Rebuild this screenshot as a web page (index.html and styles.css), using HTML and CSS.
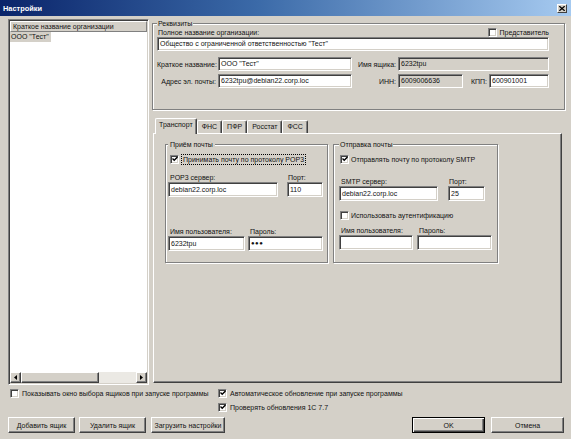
FILE: index.html
```html
<!DOCTYPE html>
<html lang="ru">
<head>
<meta charset="utf-8">
<title>Настройки</title>
<link rel="stylesheet" href="styles.css">
</head>
<body>
<div class="window">
  <div class="titlebar">
    <span class="title">Настройки</span>
    <span class="close"><svg width="6" height="5" viewBox="0 0 6 5"><path d="M0.3 0.2 L5.7 4.8 M5.7 0.2 L0.3 4.8" stroke="#000" stroke-width="1.3" fill="none"/></svg></span>
  </div>
  <div class="client">
    <div class="main">
      <div class="list">
        <div class="list-head">Краткое название организации</div>
        <div class="list-row"><span class="sel">ООО "Тест"</span></div>
        <div class="list-body"></div>
        <div class="hscroll">
          <span class="sb-btn"><svg width="3" height="5" viewBox="0 0 3 5"><path d="M3 0 L0 2.5 L3 5 Z" fill="#000"/></svg></span>
          <span class="sb-thumb"></span>
          <span class="sb-track"></span>
          <span class="sb-btn"><svg width="3" height="5" viewBox="0 0 3 5"><path d="M0 0 L3 2.5 L0 5 Z" fill="#000"/></svg></span>
        </div>
      </div>
      <div class="right">
        <fieldset class="group rekv">
          <legend>Реквизиты</legend>
          <div class="row1">
            <span class="lbl-first">Полное название организации:</span>
            <span class="cbline"><span class="cb"></span><span>Представитель</span></span>
          </div>
          <div class="input">Общество с ограниченной ответственностью "Тест"</div>
          <div class="rekv-grid">
            <span class="rlabel">Краткое название:</span>
            <div class="input">ООО "Тест"</div>
            <span class="rlabel">Имя ящика:</span>
            <div class="input ro">6232tpu</div>
            <span class="rlabel">Адрес эл. почты:</span>
            <div class="input">6232tpu@debian22.corp.loc</div>
            <span class="rlabel">ИНН:</span>
            <div class="inn-kpp">
              <div class="input ro w-inn">6009006636</div>
              <span class="kpp-label">КПП:</span>
              <div class="input w-kpp">600901001</div>
            </div>
          </div>
        </fieldset>
        <div class="tabs">
          <div class="tabstrip">
            <span class="tab active">Транспорт</span>
            <span class="tab">ФНС</span>
            <span class="tab">ПФР</span>
            <span class="tab">Росстат</span>
            <span class="tab">ФСС</span>
          </div>
          <div class="tabpanel">
            <fieldset class="group pop">
              <legend>Приём почты</legend>
              <div class="cbline cbrow"><span class="cb"><svg width="6" height="6" viewBox="0 0 6 6"><path d="M0.5 2.6 L2.2 4.3 L5.5 0.9" fill="none" stroke="#000" stroke-width="1.4"/></svg></span><span class="focus">Принимать почту по протоколу POP3</span></div>
              <div class="fields pop-r1">
                <div class="field w110"><span class="flabel">POP3 сервер:</span><div class="input">debian22.corp.loc</div></div>
                <div class="field w36 ml9"><span class="flabel p1">Порт:</span><div class="input">110</div></div>
              </div>
              <div class="fields pop-r2">
                <div class="field w77"><span class="flabel">Имя пользователя:</span><div class="input">6232tpu</div></div>
                <div class="field w75 ml3"><span class="flabel">Пароль:</span><div class="input dots">●●●</div></div>
              </div>
            </fieldset>
            <fieldset class="group smtp">
              <legend>Отправка почты</legend>
              <div class="cbline cbrow"><span class="cb"><svg width="6" height="6" viewBox="0 0 6 6"><path d="M0.5 2.6 L2.2 4.3 L5.5 0.9" fill="none" stroke="#000" stroke-width="1.4"/></svg></span><span>Отправлять почту по протоколу SMTP</span></div>
              <div class="fields smtp-r1">
                <div class="field w99"><span class="flabel">SMTP сервер:</span><div class="input">debian22.corp.loc</div></div>
                <div class="field w37 ml10"><span class="flabel p1">Порт:</span><div class="input">25</div></div>
              </div>
              <div class="cbline cbrow auth"><span class="cb"></span><span>Использовать аутентификацию</span></div>
              <div class="fields smtp-r2">
                <div class="field w74"><span class="flabel">Имя пользователя:</span><div class="input"></div></div>
                <div class="field w75 ml4"><span class="flabel">Пароль:</span><div class="input"></div></div>
              </div>
            </fieldset>
          </div>
        </div>
      </div>
    </div>
    <div class="options">
      <div class="opt-left">
        <div class="cbline optrow"><span class="cb"></span><span>Показывать окно выбора ящиков при запуске программы</span></div>
      </div>
      <div class="opt-right">
        <div class="cbline optrow"><span class="cb"><svg width="6" height="6" viewBox="0 0 6 6"><path d="M0.5 2.6 L2.2 4.3 L5.5 0.9" fill="none" stroke="#000" stroke-width="1.4"/></svg></span><span>Автоматическое обновление при запуске программы</span></div>
        <div class="cbline optrow"><span class="cb"><svg width="6" height="6" viewBox="0 0 6 6"><path d="M0.5 2.6 L2.2 4.3 L5.5 0.9" fill="none" stroke="#000" stroke-width="1.4"/></svg></span><span>Проверять обновления 1С 7.7</span></div>
      </div>
    </div>
    <div class="buttons">
      <button class="btn b-add">Добавить ящик</button>
      <button class="btn b-del">Удалить ящик</button>
      <button class="btn b-load">Загрузить настройки</button>
      <button class="btn b-ok default">OK</button>
      <button class="btn b-cancel">Отмена</button>
    </div>
  </div>
</div>
</body>
</html>
```
FILE: styles.css
```css
* { box-sizing: border-box; }
html, body { margin: 0; padding: 0; }
body {
  width: 571px;
  height: 439px;
  overflow: hidden;
  background: #d4d0c8;
  font-family: "Liberation Sans", Arial, sans-serif;
  font-size: 7px;
  color: #111;
}
.window {
  width: 571px;
  height: 439px;
  display: flex;
  flex-direction: column;
  background: #d4d0c8;
}
.titlebar {
  height: 16px;
  flex: none;
  display: flex;
  align-items: center;
  justify-content: space-between;
  padding: 0 4px 0 3px;
  background: linear-gradient(to right, #0a246a, #3b6aa8 45%, #a6caf0);
}
.title { color: #fff; font-weight: bold; font-size: 7.4px; }
.close {
  width: 10px;
  height: 9px;
  display: flex;
  align-items: center;
  justify-content: center;
  background: #d4d0c8;
  border: 1px solid;
  border-color: #fff #404040 #404040 #fff;
}
.client {
  flex: 1;
  display: flex;
  flex-direction: column;
  padding: 3px 0 0 8px;
}
.main { display: flex; height: 366px; flex: none; }

/* list */
.list {
  width: 141px;
  height: 366px;
  display: flex;
  flex-direction: column;
  background: #fff;
  border: 1px solid;
  border-color: #808080 #fff #fff #808080;
  box-shadow: inset 1px 1px #404040, inset -1px -1px #d4d0c8;
  padding: 1px;
}
.list-head {
  height: 11px;
  line-height: 9px;
  padding-left: 2px;
  background: #d4d0c8;
  border: 1px solid;
  border-color: #fff #808080 #808080 #fff;
  white-space: nowrap;
  overflow: hidden;
}
.list-row { height: 10px; line-height: 10px; }
.sel { display: inline-block; background: #d4d0c8; padding: 0 2px 0 1px; }
.list-body { flex: 1; }
.hscroll { height: 11px; display: flex; background: #ebe9e4; }
.sb-btn {
  width: 11px;
  height: 11px;
  flex: none;
  display: flex;
  align-items: center;
  justify-content: center;
  background: #d4d0c8;
  border: 1px solid;
  border-color: #fff #404040 #404040 #fff;
  box-shadow: inset -1px -1px #808080;
}
.sb-thumb {
  width: 78px;
  height: 11px;
  background: #d4d0c8;
  border: 1px solid;
  border-color: #fff #404040 #404040 #fff;
  box-shadow: inset -1px -1px #808080;
}
.sb-track { flex: 1; }

/* right column */
.right {
  margin-left: 3px;
  width: 413px;
  display: flex;
  flex-direction: column;
}
.group {
  margin: 0;
  min-width: 0;
  border: 1px solid #808080;
  box-shadow: 1px 1px 0 #fff, inset 1px 1px 0 #fff;
}
.group legend {
  padding: 0 1px;
  line-height: 9px;
  background: #d4d0c8;
}
.rekv { padding: 0 15px 21px 4px; }
.row1 {
  height: 9px;
  display: flex;
  align-items: center;
  justify-content: space-between;
}
.lbl-first { padding-left: 1px; }
.cbline { display: flex; align-items: center; gap: 3px; white-space: nowrap; }
.cb {
  width: 9px;
  height: 9px;
  flex: none;
  display: flex;
  align-items: center;
  justify-content: center;
  background: #fff;
  border: 1px solid;
  border-color: #808080 #fff #fff #808080;
  box-shadow: inset 1px 1px #404040, inset -1px -1px #d4d0c8;
}
.input {
  height: 14px;
  line-height: 12px;
  padding: 0 2px;
  background: #fff;
  border: 1px solid;
  border-color: #808080 #fff #fff #808080;
  box-shadow: inset 1px 1px #404040, inset -1px -1px #d4d0c8;
  white-space: nowrap;
  overflow: hidden;
}
.input.ro { background: #d4d0c8; }
.rekv-grid {
  margin-top: 6px;
  display: grid;
  grid-template-columns: 61px 134px 46px 1fr;
  grid-auto-rows: 14px;
  row-gap: 3px;
  align-items: center;
}
.rlabel { text-align: right; padding-right: 2px; white-space: nowrap; }
.inn-kpp { display: flex; align-items: center; }
.w-inn { width: 65px; }
.kpp-label { margin-left: auto; padding-right: 2px; }
.w-kpp { width: 60px; }

/* tabs */
.tabs {
  flex: 1;
  margin: 8px 3px 2px 1px;
  display: flex;
  flex-direction: column;
}
.tabstrip {
  height: 15px;
  flex: none;
  display: flex;
  align-items: flex-end;
  padding-left: 2px;
  position: relative;
  z-index: 1;
}
.tab {
  height: 13px;
  line-height: 11px;
  padding: 0 4px;
  background: #d4d0c8;
  border: 1px solid;
  border-color: #fff #404040 transparent #fff;
  border-bottom: none;
  border-radius: 2px 2px 0 0;
  box-shadow: inset -1px 0 #808080;
  white-space: nowrap;
}
.tab.active {
  height: 16px;
  margin-bottom: -1px;
  line-height: 12px;
  padding: 0 3px;
}
.tabpanel {
  flex: 1;
  display: flex;
  align-items: flex-start;
  gap: 5px;
  padding: 6px 0 0 11px;
  border: 1px solid;
  border-color: #fff #404040 #404040 #fff;
  box-shadow: inset -1px -1px #808080;
}
.pop { width: 163px; height: 123px; padding: 0 0 0 2px; }
.pop legend { padding: 0 2px; }
.smtp { width: 165px; height: 123px; padding: 0 0 0 5px; }
.cbrow { height: 10px; margin-top: 5px; padding-left: 2px; }
.smtp .cbrow { padding-left: 1px; gap: 2px; }
.focus { outline: 1px dotted #000; padding: 0 1px; line-height: 9px; }
.fields { display: flex; }
.field { display: flex; flex-direction: column; }
.flabel { height: 9px; line-height: 9px; padding-left: 2px; white-space: nowrap; }
.flabel.p1 { padding-left: 1px; }
.field .input { height: 15px; line-height: 13px; }
.pop-r1 { margin-top: 9px; }
.pop-r2 { margin-top: 30px; }
.smtp-r1 { margin-top: 13px; }
.smtp .auth { margin-top: 9px; }
.smtp-r2 { margin-top: 6px; }
.w110 { width: 110px; }
.w36 { width: 36px; }
.w77 { width: 77px; }
.w75 { width: 75px; }
.w99 { width: 99px; }
.w37 { width: 37px; }
.w74 { width: 74px; }
.ml9 { margin-left: 9px; }
.ml3 { margin-left: 3px; }
.ml10 { margin-left: 10px; }
.ml4 { margin-left: 4px; }
.dots { font-size: 6px; letter-spacing: 0.5px; }

/* bottom */
.options { display: flex; margin-top: 3px; }
.opt-left { width: 210px; padding-left: 2px; }
.opt-right { display: flex; flex-direction: column; gap: 4px; }
.optrow { height: 10px; }
.buttons {
  display: flex;
  margin-top: 5px;
  padding-right: 7px;
}
.btn {
  height: 16px;
  padding: 0;
  margin: 0;
  font: inherit;
  color: #111;
  background: #d4d0c8;
  border: 1px solid;
  border-color: #fff #404040 #404040 #fff;
  box-shadow: inset -1px -1px #808080;
  white-space: nowrap;
}
.btn.default {
  border-color: #000;
  box-shadow: inset 1px 1px #fff, inset -1px -1px #404040, inset -2px -2px #808080;
}
.b-add { width: 67px; }
.b-del { width: 67px; margin-left: 4px; }
.b-load { width: 74px; margin-left: 5px; }
.b-ok { width: 73px; margin-left: auto; }
.b-cancel { width: 73px; margin-left: 6px; }
```
